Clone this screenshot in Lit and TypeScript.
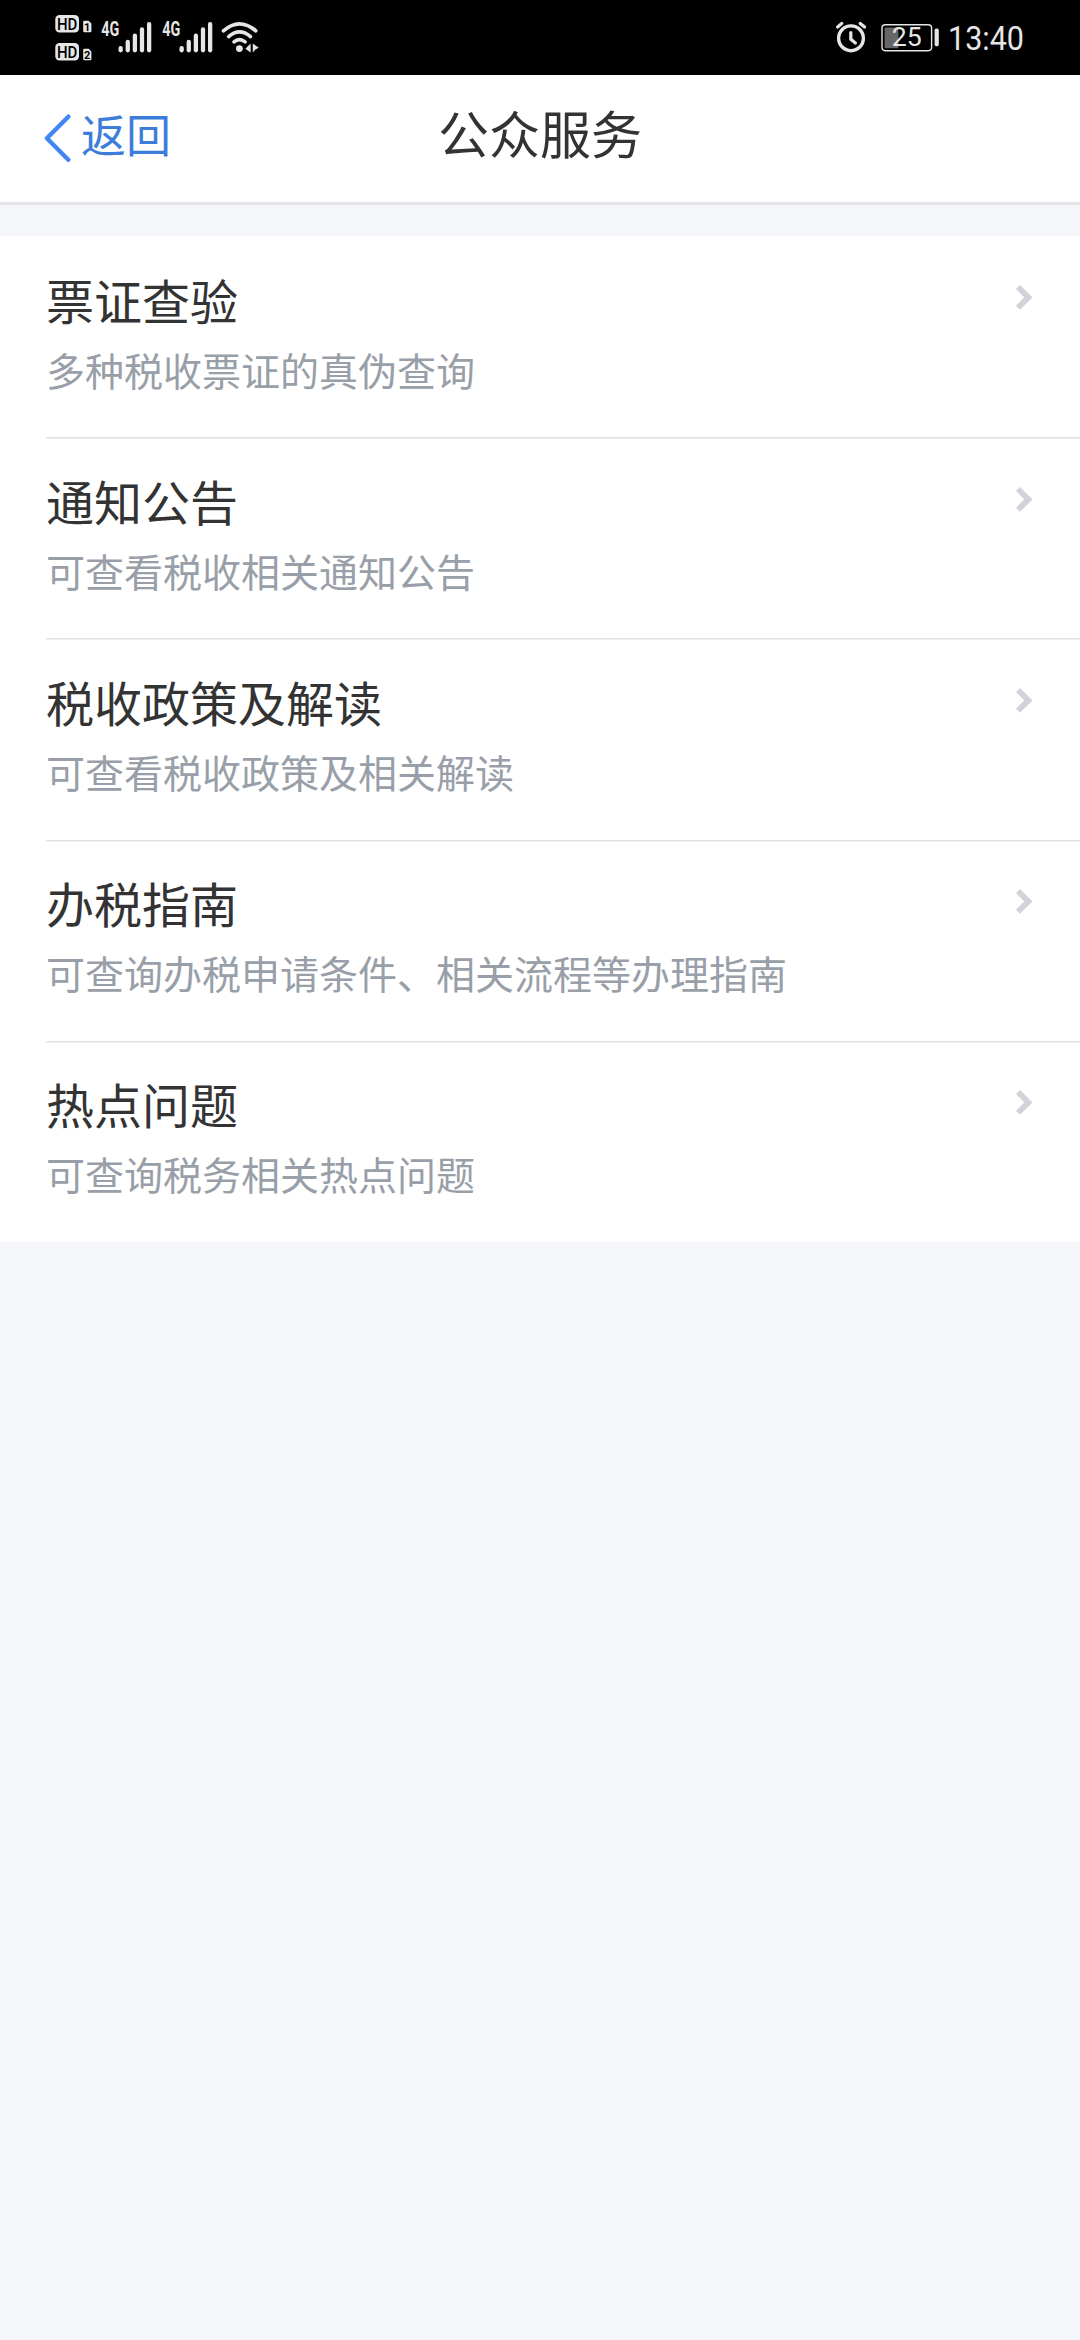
import { LitElement, html, css, svg } from "lit";
import { customElement, property } from "lit/decorators.js";

interface Entry {
  title: string;
  desc: string;
}

const ENTRIES: Entry[] = [
  { title: "票证查验", desc: "多种税收票证的真伪查询" },
  { title: "通知公告", desc: "可查看税收相关通知公告" },
  { title: "税收政策及解读", desc: "可查看税收政策及相关解读" },
  { title: "办税指南", desc: "可查询办税申请条件、相关流程等办理指南" },
  { title: "热点问题", desc: "可查询税务相关热点问题" },
];

@customElement("status-bar")
export class StatusBar extends LitElement {
  static styles = css`
    :host {
      display: flex;
      justify-content: space-between;
      height: 75px;
      background: #000;
    }
    svg {
      display: block;
      flex: none;
    }
    .ink {
      fill: #e6e6e6;
    }
    .line {
      fill: none;
      stroke: #e6e6e6;
      stroke-linecap: round;
      stroke-linejoin: round;
    }
    .net {
      font: 700 19.5px Roboto, "Liberation Sans", sans-serif;
      fill: #e6e6e6;
    }
    .hd {
      font: 500 16.5px Roboto, "Liberation Sans", sans-serif;
      fill: #000;
    }
    .sim {
      font: 700 11px Roboto, "Liberation Sans", sans-serif;
      fill: #000;
    }
    .pct {
      font: 400 26px Roboto, "Liberation Sans", sans-serif;
      fill: #e6e6e6;
    }
    .clock {
      font: 400 34px Roboto, "Liberation Sans", sans-serif;
      fill: #e6e6e6;
    }
  `;

  private sim(y: number, n: string) {
    return svg`
      <rect class="ink" x="55.3" y=${y} width="23.7" height="17.4" rx="4.2"></rect>
      <text class="hd" x="57" y=${y + 14.6} textLength="20.4" lengthAdjust="spacingAndGlyphs">HD</text>
      <path class="ink" d="M84.2 ${y + 5.8}h4.4l2.8 2.8v7.7a1 1 0 0 1-1 1h-6.2a1 1 0 0 1-1-1v-9.5a1 1 0 0 1 1-1z"></path>
      <text class="sim" x="87.2" y=${y + 15.6} text-anchor="middle">${n}</text>
    `;
  }

  private signal(x: number) {
    const tops = [46, 39.8, 33.6, 27.3, 22];
    return svg`
      <text class="net" x=${x} y="36" textLength="18" lengthAdjust="spacingAndGlyphs">4G</text>
      ${tops.map(
        (t, i) =>
          svg`<rect class="ink" x=${x + 17.2 + i * 7.12} y=${t} width="4.3" height=${52.4 - t} rx="2.1"></rect>`
      )}
    `;
  }

  render() {
    return html`
      <svg width="300" height="75" viewBox="0 0 300 75">
        ${this.sim(15, "1")} ${this.sim(43, "2")}
        ${this.signal(101.3)} ${this.signal(162.3)}
        <path class="line" stroke-width="3.6" d="M223.4 30.8Q239.5 16.8 255.8 30.8"></path>
        <path class="line" stroke-width="3.6" d="M228.7 36.6Q239.5 27.2 250.5 36.6"></path>
        <path class="line" stroke-width="3.6" d="M234 41.8Q239.5 37.4 245.1 41.8"></path>
        <circle class="ink" cx="239.4" cy="48.6" r="3.4"></circle>
        <path class="ink" d="M245.4 48.8l5.2-5.2v8.8z"></path>
        <path class="ink" d="M252.8 43.6l6 4.2-3.4 1.6-2.6 3z"></path>
      </svg>
      <svg width="270" height="75" viewBox="810 0 270 75">
        <circle class="line" stroke-width="3.4" cx="851" cy="38.3" r="12.4"></circle>
        <path class="line" stroke-width="3.2" d="M850.8 32.5V39.3L855.4 43"></path>
        <path class="line" stroke-width="3.2" d="M837.6 27L841.8 23.4M860.2 23.4L864.6 27"></path>
        <rect class="line" stroke-width="1.4" x="882" y="24.7" width="49.6" height="26" rx="3.4"></rect>
        <rect fill="#666" x="884.6" y="27.4" width="13.8" height="20.8" rx="1"></rect>
        <rect class="ink" x="934.6" y="28.6" width="4.2" height="17.6" rx="1.6"></rect>
        <text class="pct" x="891.8" y="46.2" textLength="30" lengthAdjust="spacingAndGlyphs">25</text>
        <text class="clock" x="948" y="50.2" textLength="76" lengthAdjust="spacingAndGlyphs">13:40</text>
      </svg>
    `;
  }
}

@customElement("nav-header")
export class NavHeader extends LitElement {
  static styles = css`
    :host {
      display: grid;
      grid-template-columns: 1fr auto 1fr;
      align-items: start;
      box-sizing: border-box;
      height: 130px;
      padding: 27px 44px 0;
      background: #fff;
      border-bottom: 3px solid #e2e4e8;
    }
    .back {
      display: flex;
      gap: 10px;
      padding-top: 2px;
      color: #3b7dd8;
      font-size: 45px;
      line-height: 60px;
    }
    .back svg {
      display: block;
      margin-top: 10px;
    }
    .title {
      font-size: 51px;
      line-height: 60px;
      color: #333;
    }
  `;

  render() {
    return html`
      <div class="back">
        <svg width="27" height="48" viewBox="0 0 27 48">
          <path
            d="M24.3 2.7L2.9 24.2L24.3 45.7"
            fill="none"
            stroke="#4285f4"
            stroke-width="4.4"
            stroke-linecap="round"
            stroke-linejoin="round"
          ></path>
        </svg>
        <span>返回</span>
      </div>
      <div class="title">公众服务</div>
      <div></div>
    `;
  }
}

@customElement("list-entry")
export class ListEntry extends LitElement {
  @property() heading = "";
  @property() desc = "";

  static styles = css`
    :host {
      display: flex;
      justify-content: space-between;
      box-sizing: border-box;
      height: 201.2px;
      margin-left: 46px;
      padding: 27.6px 47px 0 0;
    }
    .title {
      font-size: 48px;
      line-height: 70px;
      color: #333;
    }
    .desc {
      font-size: 39px;
      line-height: 56px;
      margin-top: 7px;
      color: #999fa8;
    }
    svg {
      display: block;
      flex: none;
      margin-top: 20.8px;
    }
  `;

  render() {
    return html`
      <div>
        <div class="title">${this.heading}</div>
        <div class="desc">${this.desc}</div>
      </div>
      <svg width="18" height="26" viewBox="0 0 18 26">
        <path d="M3 3L13.4 13.4L3 23.8" fill="none" stroke="#d1d3d9" stroke-width="5.8"></path>
      </svg>
    `;
  }
}

@customElement("app-root")
export class AppRoot extends LitElement {
  static styles = css`
    :host {
      display: block;
      width: 1080px;
      height: 2340px;
      overflow: hidden;
      background: #f4f6fa;
      font-family: "Noto Sans CJK SC", sans-serif;
    }
    .list {
      margin-top: 31px;
      height: 1006px;
      background: #fff;
    }
    .rule {
      height: 1px;
      margin: 0 0 -2px 46px;
      background: #e0e1e3;
      border-bottom: 1px solid #f0f0f1;
    }
  `;

  render() {
    return html`
      <status-bar></status-bar>
      <nav-header></nav-header>
      <div class="list">
        ${ENTRIES.map(
          (e, i) => html`
            ${i ? html`<div class="rule"></div>` : ""}
            <list-entry .heading=${e.title} .desc=${e.desc}></list-entry>
          `
        )}
      </div>
    `;
  }
}
